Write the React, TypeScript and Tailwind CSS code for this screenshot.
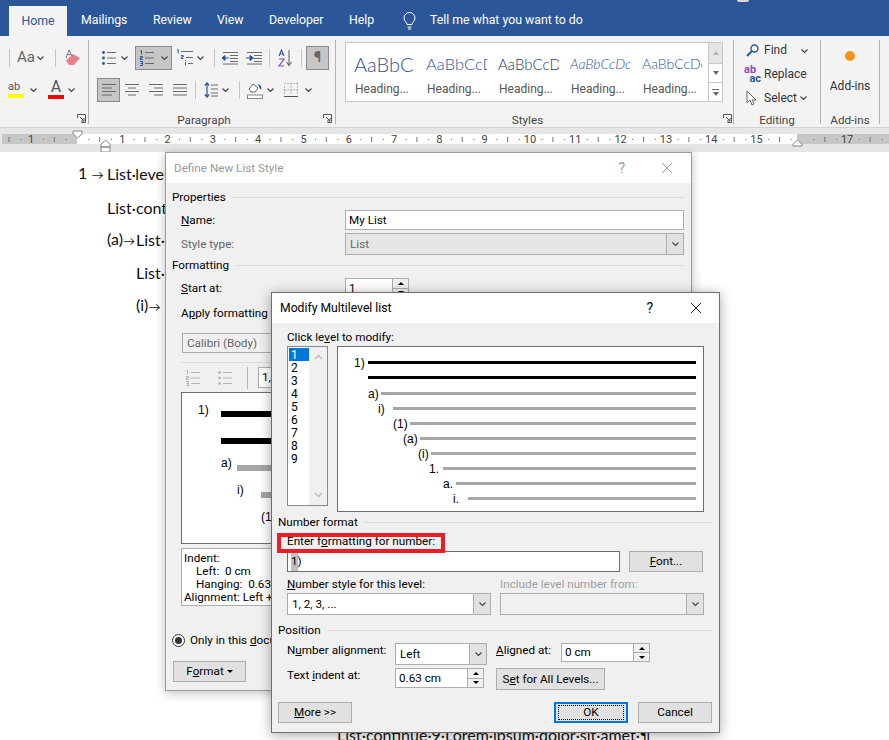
import type { ReactNode } from "react"

const LINE = "#6a6a6a"
const BLUE = "#2b579a"

function Chev({ className = "" }: { className?: string }) {
  return (
    <svg width="9" height="6" viewBox="0 0 9 6" className={`shrink-0 ${className}`}>
      <path d="M1.5 1.5 4.5 4.5 7.5 1.5" fill="none" stroke="#444" strokeWidth="1.2" />
    </svg>
  )
}

function Lines({ ys, x1, x2 }: { ys: number[]; x1: number | number[]; x2: number | number[] }) {
  return (
    <>
      {ys.map((y, i) => (
        <line
          key={y}
          x1={Array.isArray(x1) ? x1[i] : x1}
          x2={Array.isArray(x2) ? x2[i] : x2}
          y1={y}
          y2={y}
          stroke={LINE}
          strokeWidth="1"
        />
      ))}
    </>
  )
}

function Bullets({ faded }: { faded?: boolean }) {
  const c = faded ? "#b5b5b5" : BLUE
  return (
    <svg width="16" height="16" viewBox="0 0 16 16" className="shrink-0">
      <circle cx="2.5" cy="2.5" r="1.4" fill={c} />
      <circle cx="2.5" cy="8" r="1.4" fill={c} />
      <circle cx="2.5" cy="13.5" r="1.4" fill={c} />
      {[2.5, 8, 13.5].map((y) => (
        <line key={y} x1="6" x2="15" y1={y} y2={y} stroke={faded ? "#b5b5b5" : LINE} />
      ))}
    </svg>
  )
}

function Numbers({ faded }: { faded?: boolean }) {
  const c = faded ? "#b5b5b5" : BLUE
  return (
    <svg width="16" height="16" viewBox="0 0 16 16" className="shrink-0">
      <path d="M1.2 1.200 2.500.5v4M1 6.500h2.500V8H1v1.500h2.500M1 11.500h2.500v4H1M1.500 13.500h2" fill="none" stroke={c} strokeWidth="1" />
      {[2.5, 8, 13.5].map((y) => (
        <line key={y} x1="6" x2="15" y1={y} y2={y} stroke={faded ? "#b5b5b5" : LINE} />
      ))}
    </svg>
  )
}

function Multilevel() {
  return (
    <svg width="18" height="17" viewBox="0 0 18 17" className="shrink-0">
      <path d="M1 1.200 2.200.5v4M5 6.500h2.200V8H5.400v1.500h2M9.500 13v3.500M9.500 11v1" fill="none" stroke={BLUE} strokeWidth="1" />
      <Lines ys={[2.5, 8.5, 14.5]} x1={[5, 10, 12]} x2={17} />
    </svg>
  )
}

function Indent({ more }: { more?: boolean }) {
  return (
    <svg width="16" height="14" viewBox="0 0 16 14" className="shrink-0">
      <Lines ys={[1.5, 4.5, 7.5, 10.5, 13]} x1={[1, 8, 8, 8, 1]} x2={16} />
      <path d={more ? "M0 7h4V4.5L7.5 7 4 9.5V7" : "M7 7H3V4.5L0 7l3 2.5V7"} fill={BLUE} stroke={BLUE} />
    </svg>
  )
}

function Sort() {
  return (
    <svg width="15" height="18" viewBox="0 0 15 18" className="shrink-0">
      <path d="M1 7 3.5 1 6 7M2 5h3" fill="none" stroke={BLUE} strokeWidth="1.1" />
      <path d="M1 10h5L1 17h5" fill="none" stroke="#8a4fb5" strokeWidth="1.2" />
      <path d="M11 1v15M8.5 13l2.5 3.5 2.5-3.5" fill="none" stroke={LINE} strokeWidth="1.1" />
    </svg>
  )
}

function Align({ kind }: { kind: "left" | "center" | "right" | "justify" }) {
  const ys = [1.5, 5, 8.5, 12]
  const x1 = { left: [0, 0, 0, 0], center: [0, 3, 0, 3], right: [0, 5, 0, 5], justify: [0, 0, 0, 0] }[kind]
  const x2 = { left: [14, 10, 14, 10], center: [14, 11, 14, 11], right: [14, 14, 14, 14], justify: [14, 14, 14, 14] }[kind]
  return (
    <svg width="14" height="13" viewBox="0 0 14 13" className="shrink-0">
      <Lines ys={ys} x1={x1} x2={x2} />
    </svg>
  )
}

function Launcher({ className }: { className: string }) {
  return (
    <svg width="9" height="9" viewBox="0 0 9 9" className={className}>
      <path d="M.5 4V.5h8v8H4.500M3 3l4 4M7 4v3H4" fill="none" stroke="#555" strokeWidth="1" />
    </svg>
  )
}

function RibbonSep() {
  return <div className="h-[84px] w-px shrink-0 self-center bg-[#b1b1b1]" />
}

function ToolSep({ className = "" }: { className?: string }) {
  return <div className={`h-[18px] w-px shrink-0 bg-[#c6c6c6] ${className}`} />
}

function GroupLabel({ children, className = "" }: { children: ReactNode; className?: string }) {
  return <div className={`mt-auto flex h-[16px] items-center justify-center pt-[2px] text-[11.7px] text-[#444] ${className}`}>{children}</div>
}

const styleSamples = [
  { text: "AaBbCc", cls: "text-[20px] font-light text-[#2f5496] ml-[8px] w-[59px]" },
  { text: "AaBbCcD", cls: "text-[16.5px] font-light text-[#2f5496] ml-[8px] w-[61px]" },
  { text: "AaBbCcD", cls: "text-[15px] font-light text-[#1f3864] ml-[8px] w-[61px]" },
  { text: "AaBbCcDc", cls: "text-[14px] font-light italic text-[#2f5496] ml-[8px] w-[60px]" },
  { text: "AaBbCcDc", cls: "text-[14px] font-light text-[#2f5496] ml-[8px] w-[60px]" },
]

function Ribbon() {
  return (
    <div className="relative flex h-[92px] border-b border-[#d2d2d2] bg-[#f3f3f3]">
      {/* Font, cut off at the left */}
      <div className="flex w-[88px] shrink-0 flex-col">
        <div className="mt-[10px] flex h-[23px] items-center">
          <ToolSep className="ml-[9px]" />
          <span className="ml-[7px] w-[16px] text-[15px] text-[#666]">Aa</span>
          <Chev className="ml-[3px]" />
          <ToolSep className="ml-[10px]" />
          <svg width="16" height="17" viewBox="0 0 16 17" className="ml-[9px] shrink-0">
            <path d="M1 11.500 8 5l7 4-6 7H4z" fill="#e8808c" />
            <path d="M1 9 4 1l3 6M2.500 5.500h3" fill="none" stroke="#777" strokeWidth="1" />
          </svg>
        </div>
        <div className="mt-[9px] flex h-[23px] items-center">
          <div className="ml-[8px] flex w-[16px] flex-col">
            <span className="h-[12px] text-[11px] leading-[12px] text-[#555]">ab</span>
            <span className="mt-px h-[4px] bg-[#ffff00]" />
          </div>
          <Chev className="ml-[5px]" />
          <div className="ml-[10px] flex w-[16px] flex-col items-center">
            <span className="h-[14px] text-[16px] leading-[14px] text-[#555]">A</span>
            <span className="mt-px h-[4px] w-full bg-[#ff0000]" />
          </div>
          <Chev className="ml-[3px]" />
        </div>
        <Launcher className="mb-[4px] ml-[77px] mt-auto" />
      </div>
      <RibbonSep />

      {/* Paragraph */}
      <div className="relative flex w-[246px] shrink-0 flex-col">
        <div className="mt-[10px] flex h-[23px] items-center">
          <div className="ml-[12px]"><Bullets /></div>
          <Chev className="ml-[3px]" />
          <div className="ml-[6px] flex h-[24px] w-[37px] items-center border border-[#8a8a8a] bg-[#c6c6c6] pl-[3px]">
            <Numbers />
            <Chev className="ml-[5px]" />
          </div>
          <div className="ml-[4px]"><Multilevel /></div>
          <Chev className="ml-[2px]" />
          <ToolSep className="ml-[9px]" />
          <div className="ml-[7px]"><Indent /></div>
          <div className="ml-[8px]"><Indent more /></div>
          <ToolSep className="ml-[7px]" />
          <div className="ml-[8px]"><Sort /></div>
          <ToolSep className="ml-[8px]" />
          <div className="ml-[4px] flex h-[24px] w-[23px] items-center justify-center border border-[#8a8a8a] bg-[#c6c6c6] text-[15px] font-bold text-[#666]">¶</div>
        </div>
        <div className="mt-[9px] flex h-[23px] items-center">
          <div className="ml-[8px] flex h-[24px] w-[23px] items-center justify-center border border-[#8a8a8a] bg-[#c6c6c6]">
            <Align kind="left" />
          </div>
          <div className="ml-[5px]"><Align kind="center" /></div>
          <div className="ml-[10px]"><Align kind="right" /></div>
          <div className="ml-[10px]"><Align kind="justify" /></div>
          <ToolSep className="ml-[8px]" />
          <svg width="14" height="16" viewBox="0 0 14 16" className="ml-[8px] shrink-0">
            <path d="M3 1v14M.8 3.500 3 1l2.200 2.500M.8 12.500 3 15l2.200-2.500" fill="none" stroke={BLUE} strokeWidth="1.2" />
            <Lines ys={[3, 7, 11, 14]} x1={7} x2={14} />
          </svg>
          <Chev className="ml-[3px]" />
          <ToolSep className="ml-[9px]" />
          <svg width="16" height="18" viewBox="0 0 16 18" className="ml-[7px] shrink-0">
            <path d="M2 8 6 3l5 4-3 4H4z" fill="#fff" stroke="#666" />
            <path d="M11 3c3 1 4 3 3 6-1-1-2-3-3-6z" fill={BLUE} />
            <rect x=".5" y="14" width="15" height="3.500" fill="#fff" stroke="#888" />
          </svg>
          <Chev className="ml-[3px]" />
          <svg width="14" height="14" viewBox="0 0 14 14" className="ml-[9px] shrink-0">
            <path d="M.5.5h13M.5 3.500v9M13.500.5v12M.5 7h13M7 .5v12" fill="none" stroke="#777" strokeDasharray="1 2" />
            <path d="M0 13.500h14" stroke="#555" />
          </svg>
          <Chev className="ml-[6px]" />
        </div>
        <GroupLabel className="pr-[16px]">Paragraph</GroupLabel>
        <Launcher className="absolute bottom-[4px] right-[3px]" />
      </div>
      <RibbonSep />

      {/* Styles */}
      <div className="relative flex w-[397px] shrink-0 flex-col">
        <div className="ml-[9px] mt-[6px] flex h-[60px] w-[378px] border border-[#c6c6c6] bg-white">
          <div className="flex flex-1">
            {styleSamples.map((s, i) => (
              <div key={i} className="flex w-[72px] flex-col">
                <div className={`mt-[7px] h-[30px] overflow-hidden whitespace-nowrap font-['Lato',sans-serif] leading-[28px] ${s.cls}`}>{s.text}</div>
                <div className="text-center text-[12px] text-[#555]">Heading...</div>
              </div>
            ))}
          </div>
          <div className="flex w-[14px] flex-col border-l border-[#c6c6c6] text-[#777]">
            <div className="flex h-[21px] items-center justify-center border-b border-[#c6c6c6] bg-[#e6e6e6]">
              <span className="h-0 w-0 border-x-[3px] border-b-[4px] border-x-transparent border-b-[#b5b5b5]" />
            </div>
            <div className="flex h-[19px] items-center justify-center border-b border-[#c6c6c6]">
              <span className="h-0 w-0 border-x-[3px] border-t-[4px] border-x-transparent border-t-[#666]" />
            </div>
            <div className="flex flex-1 flex-col items-center justify-center gap-[2px]">
              <span className="h-px w-[7px] bg-[#666]" />
              <span className="h-0 w-0 border-x-[3px] border-t-[4px] border-x-transparent border-t-[#666]" />
            </div>
          </div>
        </div>
        <GroupLabel className="pr-[14px]">Styles</GroupLabel>
        <Launcher className="absolute bottom-[4px] right-[1px]" />
      </div>
      <RibbonSep />

      {/* Editing */}
      <div className="flex w-[86px] shrink-0 flex-col text-[12px] text-[#333]">
        <div className="mt-[3px] flex h-[23px] items-center pl-[12px]">
          <svg width="13" height="13" viewBox="0 0 13 13" className="shrink-0">
            <circle cx="8.500" cy="4.500" r="3.500" fill="none" stroke={BLUE} strokeWidth="1.400" />
            <path d="M6 7 1 12" stroke={BLUE} strokeWidth="2" />
          </svg>
          <span className="ml-[5px] w-[36px]">Find</span>
          <Chev />
        </div>
        <div className="flex h-[24px] items-center pl-[10px]">
          <div className="flex w-[17px] flex-col text-[11px] font-bold leading-[9px]">
            <span className="text-[#8a4fb5]">ab</span>
            <span className="text-right text-[#2b579a]">ac</span>
          </div>
          <span className="ml-[3px]">Replace</span>
        </div>
        <div className="flex h-[24px] items-center pl-[12px]">
          <svg width="12" height="16" viewBox="0 0 12 16" className="shrink-0">
            <path d="M1 1v12l3-3 2 5 2-1-2-4h4z" fill="#fff" stroke="#666" />
          </svg>
          <span className="ml-[6px]">Select</span>
          <Chev className="ml-[2px]" />
        </div>
        <GroupLabel>Editing</GroupLabel>
      </div>
      <RibbonSep />

      {/* Add-ins */}
      <div className="flex w-[58px] shrink-0 flex-col text-[12px] text-[#333]">
        <div className="mx-auto mt-[15px] size-[10px] rounded-full bg-[#f7931e]" />
        <div className="mt-[16px] text-center">Add-ins</div>
        <GroupLabel>Add-ins</GroupLabel>
      </div>
      <RibbonSep />
    </div>
  )
}

function Ruler() {
  const labels = [1, 2, 3, 4, 5, 6, 7, 8, 9, 10, 11, 12, 13, 14, 15, 17]
  const ticks: { x: number; big: boolean }[] = []
  for (let q = -6; q < 72; q++) {
    if (q % 4 === 0) continue
    ticks.push({ x: 77 + q * 11.33, big: Math.abs(q) % 4 === 2 })
  }
  return (
    <svg width="889" height="24" viewBox="0 128 889 24" className="block shrink-0">
      <rect x="0" y="128" width="889" height="24" fill="#e6e6e6" />
      <rect x="2" y="134" width="75" height="10" fill="#c6c6c6" />
      <rect x="77" y="134" width="720" height="10" fill="#fff" />
      <rect x="797" y="134" width="92" height="10" fill="#c6c6c6" />
      {ticks.map((t) =>
        t.big ? (
          <line key={t.x} x1={t.x} x2={t.x} y1="137" y2="142" stroke="#777" />
        ) : (
          <rect key={t.x} x={t.x} y="139" width="1" height="1" fill="#666" />
        ),
      )}
      <text x="31" y="143" textAnchor="middle" fontSize="11" fill="#444" fontFamily="Roboto, sans-serif">1</text>
      {labels.map((n) => (
        <text key={n} x={77 + n * 45.3} y="143" textAnchor="middle" fontSize="11" fill="#444" fontFamily="Roboto, sans-serif">
          {n}
        </text>
      ))}
      <path d="M73 131h9v3l-4.500 4-4.500-4z" fill="#fff" stroke="#888" />
      <path d="M101 144l4.500-4 4.500 4v3h-9zM101 147h9v5h-9z" fill="#fff" stroke="#888" />
      <path d="M793 146v-2l4.500-4 4.500 4v2z" fill="#fff" stroke="#888" />
    </svg>
  )
}

function Combo({ value, disabled, className }: { value?: string; disabled?: boolean; className: string }) {
  return (
    <div className={`flex border border-[#adadad] ${disabled ? "bg-[#e6e6e6] text-[#666]" : "bg-white"} ${className}`}>
      <span className="flex flex-1 items-center overflow-hidden whitespace-nowrap pl-[4px]">{value}</span>
      <span className="flex w-[17px] items-center justify-center border-l border-[#adadad] bg-[#e1e1e1]">
        <Chev />
      </span>
    </div>
  )
}

function Spin({ value, className }: { value: string; className: string }) {
  return (
    <div className={`flex border border-[#adadad] bg-white ${className}`}>
      <span className="flex flex-1 items-center pl-[3px]">{value}</span>
      <span className="flex w-[16px] flex-col border-l border-[#adadad] bg-[#f0f0f0]">
        <span className="flex flex-1 items-center justify-center border-b border-[#adadad]">
          <span className="h-0 w-0 border-x-[3px] border-b-[3px] border-x-transparent border-b-black" />
        </span>
        <span className="flex flex-1 items-center justify-center">
          <span className="h-0 w-0 border-x-[3px] border-t-[3px] border-x-transparent border-t-black" />
        </span>
      </span>
    </div>
  )
}

function Btn({ children, className }: { children: ReactNode; className: string }) {
  return <div className={`flex items-center justify-center border border-[#adadad] bg-[#e1e1e1] ${className}`}>{children}</div>
}

function Section({ title, className = "" }: { title: string; className?: string }) {
  return (
    <div className={`flex h-[16px] items-center ${className}`}>
      <span>{title}</span>
      <span className="ml-[6px] h-px flex-1 bg-[#dcdcdc]" />
    </div>
  )
}

function CloseX({ color }: { color: string }) {
  return (
    <svg width="12" height="12" viewBox="0 0 12 12" className="shrink-0">
      <path d="M1 1l10 10M11 1 1 11" stroke={color} strokeWidth="1" />
    </svg>
  )
}

function DefineDialog() {
  return (
    <div className="absolute left-[165px] top-[152px] flex h-[539px] w-[527px] flex-col border border-[#9b9b9b] bg-[#f0f0f0] shadow-[0_2px_10px_rgba(0,0,0,0.25)]">
      <div className="flex h-[30px] shrink-0 items-center bg-white pl-[8px] text-[#999]">
        <span className="flex-1">Define New List Style</span>
        <span className="mr-[36px] text-[14px]">?</span>
        <div className="mr-[18px]"><CloseX color="#999" /></div>
      </div>
      <div className="flex flex-col pl-[6px] pr-[6px]">
        <Section title="Properties" className="mt-[6px]" />
        <div className="mt-[5px] flex h-[20px] items-center pl-[9px]">
          <span className="w-[164px]"><u>N</u>ame:</span>
          <div className="flex h-full w-[339px] items-center border border-[#adadad] bg-white pl-[3px]">My List</div>
        </div>
        <div className="mt-[3px] flex h-[22px] items-center pl-[9px] text-[#666]">
          <span className="w-[164px]">Style type:</span>
          <Combo value="List" disabled className="h-full w-[339px]" />
        </div>
        <Section title="Formatting" className="mt-[2px]" />
        <div className="mt-[5px] flex h-[20px] items-center pl-[9px]">
          <span className="w-[164px]"><u>S</u>tart at:</span>
          <Spin value="1" className="h-full w-[64px]" />
        </div>
        <div className="mt-[7px] flex h-[16px] items-center pl-[9px]">A<u>p</u>ply formatting to:</div>
        <Combo value="Calibri (Body)" disabled className="ml-[10px] mt-[12px] h-[20px] w-[200px] bg-[#f0f0f0]" />
        <div className="ml-[9px] mt-[9px] h-px w-[495px] bg-[#dcdcdc]" />
        <div className="ml-[9px] mt-[4px] flex h-[21px] items-center">
          <div className="ml-[4px]"><Numbers faded /></div>
          <div className="ml-[16px]"><Bullets faded /></div>
          <div className="ml-[14px] h-[22px] w-px bg-[#b5b5b5]" />
          <div className="ml-[10px] flex h-full w-[60px] items-center border border-[#adadad] bg-white pl-[3px]">1, 2, 3</div>
        </div>
        <div className="ml-[9px] mt-[4px] h-[152px] w-[495px] border border-[#6d6d6d] bg-white">
          <svg width="493" height="150" viewBox="182 393 493 150" className="block">
            <g fontFamily="'Liberation Sans', sans-serif" fontSize="12" fill="#000">
              <text x="198" y="414">1)</text>
              <text x="221" y="467">a)</text>
              <text x="237" y="494">i)</text>
              <text x="261" y="521">(1)</text>
            </g>
            <rect x="221" y="411" width="60" height="6" fill="#000" />
            <rect x="221" y="438" width="60" height="6" fill="#000" />
            <rect x="237" y="465" width="44" height="6" fill="#a6a6a6" />
            <rect x="261" y="492" width="20" height="6" fill="#a6a6a6" />
          </svg>
        </div>
        <div className="ml-[9px] mt-[4px] h-[58px] w-[495px] border border-[#adadad] bg-white px-[2px] py-[3px] leading-[13px]">
          <div>Indent:</div>
          <div className="pl-[12px]">Left:&nbsp; 0 cm</div>
          <div className="pl-[12px]">Hanging:&nbsp; 0.63 cm</div>
          <div>Alignment: Left + Aligned at</div>
        </div>
        <div className="mt-[26px] flex h-[16px] items-center">
          <span className="flex size-[13px] items-center justify-center rounded-full border border-[#333] bg-white">
            <span className="size-[7px] rounded-full bg-[#333]" />
          </span>
          <span className="ml-[5px]">Only in this <u>d</u>ocument</span>
        </div>
        <Btn className="ml-px mt-[13px] h-[21px] w-[73px]">
          F<u>o</u>rmat
          <span className="ml-[3px] h-0 w-0 border-x-[3px] border-t-[3px] border-x-transparent border-t-black" />
        </Btn>
      </div>
    </div>
  )
}

const previewRows = [
  { num: "a)", nx: 368, lx: 381, y: 392 },
  { num: "i)", nx: 378, lx: 393, y: 407 },
  { num: "(1)", nx: 393, lx: 410, y: 422 },
  { num: "(a)", nx: 403, lx: 420, y: 437 },
  { num: "(i)", nx: 418, lx: 431, y: 452 },
  { num: "1.", nx: 429, lx: 443, y: 467 },
  { num: "a.", nx: 443, lx: 456, y: 482 },
  { num: "i.", nx: 453, lx: 468, y: 497 },
]

function ModifyDialog() {
  return (
    <div className="absolute left-[271px] top-[292px] flex h-[441px] w-[449px] flex-col border border-[#6f6f6f] bg-[#f0f0f0] text-black shadow-[0_2px_12px_rgba(0,0,0,0.35)]">
      <div className="flex h-[30px] shrink-0 items-center bg-white pl-[8px]">
        <span className="flex-1 text-[12.2px]">Modify Multilevel list</span>
        <span className="mr-[37px] text-[14px]">?</span>
        <div className="mr-[17px]"><CloseX color="#222" /></div>
      </div>
      <div className="mt-[6px] flex h-[16px] items-center pl-[15px]">Click le<u>v</u>el to modify:</div>
      <div className="mt-px flex items-start pl-[15px]">
        <div className="flex h-[160px] w-[41px] border border-[#8a8a8a] bg-white">
          <div className="ml-px mt-px w-[20px]">
            {[1, 2, 3, 4, 5, 6, 7, 8, 9].map((n) => (
              <div key={n} className={`h-[13px] pl-[2px] text-[12px] leading-[14px] ${n === 1 ? "bg-[#0078d7] text-white" : ""}`}>
                {n}
              </div>
            ))}
          </div>
          <div className="flex flex-1 flex-col items-center justify-between bg-[#f0f0f0] py-[7px]">
            <svg width="9" height="6" viewBox="0 0 9 6"><path d="M1 5l3.500-3.500L8 5" fill="none" stroke="#bbb" strokeWidth="1.500" /></svg>
            <svg width="9" height="6" viewBox="0 0 9 6"><path d="M1 1l3.500 3.500L8 1" fill="none" stroke="#bbb" strokeWidth="1.500" /></svg>
          </div>
        </div>
        <div className="ml-[9px] h-[166px] w-[367px] border border-[#6d6d6d] bg-white">
          <svg width="365" height="164" viewBox="338 347 365 164" className="block">
            <g fontFamily="'Liberation Sans', sans-serif" fontSize="12" fill="#000">
              <text x="354" y="367">1)</text>
              {previewRows.map((r) => (
                <text key={r.y} x={r.nx} y={r.y + 6}>{r.num}</text>
              ))}
            </g>
            <rect x="368" y="361" width="328" height="3" fill="#000" />
            <rect x="368" y="376" width="328" height="3" fill="#000" />
            {previewRows.map((r) => (
              <rect key={r.y} x={r.lx} y={r.y} width={696 - r.lx} height="3" fill="#a6a6a6" />
            ))}
          </svg>
        </div>
      </div>
      <Section title="Number format" className="ml-[6px] mr-[7px] mt-[2px]" />
      <div className="mt-[3px] flex h-[17px] items-center pl-[15px]">Enter f<u>o</u>rmatting for number:</div>
      <div className="mt-px flex h-[21px] pl-[15px]">
        <div className="flex w-[333px] items-center border border-[#6d6d6d] bg-white pl-[3px]">
          <span className="bg-[#c0c0c0]">1</span>)
        </div>
        <Btn className="ml-[9px] w-[74px]"><span><u>F</u>ont...</span></Btn>
      </div>
      <div className="mt-[4px] flex h-[16px] items-center pl-[15px]">
        <span className="w-[213px]"><u>N</u>umber style for this level:</span>
        <span className="text-[#a0a0a0]">Include level number from:</span>
      </div>
      <div className="mt-px flex h-[22px] pl-[15px]">
        <Combo value="1, 2, 3, ..." className="w-[204px]" />
        <Combo disabled className="ml-[9px] w-[204px] bg-[#f0f0f0]" />
      </div>
      <Section title="Position" className="ml-[6px] mr-[7px] mt-[7px]" />
      <div className="mt-[5px] flex h-[22px] pl-[15px]">
        <span className="w-[108px] leading-[14px]">N<u>u</u>mber alignment:</span>
        <Combo value="Left" className="w-[92px]" />
        <span className="ml-[9px] w-[65px] leading-[14px]"><u>A</u>ligned at:</span>
        <Spin value="0 cm" className="h-[19px] w-[89px]" />
      </div>
      <div className="mt-[3px] flex h-[22px] pl-[15px]">
        <span className="w-[108px] leading-[14px]">Text <u>i</u>ndent at:</span>
        <Spin value="0.63 cm" className="h-[20px] w-[89px]" />
        <Btn className="ml-[12px] w-[109px]"><span>S<u>e</u>t for All Levels...</span></Btn>
      </div>
      <div className="mt-[12px] flex h-[21px] pl-[6px] pr-[7px]">
        <Btn className="w-[74px]"><span><u>M</u>ore &gt;&gt;</span></Btn>
        <div className="ml-auto flex w-[74px] items-center justify-center border-2 border-[#0078d7] bg-[#e1e1e1]">
          <span className="flex h-[15px] w-[66px] items-center justify-center border border-dotted border-black">OK</span>
        </div>
        <Btn className="ml-[10px] w-[74px]">Cancel</Btn>
      </div>
      {/* red marker the author drew over the screenshot */}
      <div className="absolute left-[5px] top-[240px] h-[20px] w-[168px] border-4 border-[#ee1c25]" />
    </div>
  )
}

function DocLine({ children, className }: { children: ReactNode; className: string }) {
  return <div className={`flex h-[20px] items-center whitespace-nowrap ${className}`}>{children}</div>
}

export default function App() {
  return (
    <div className="relative h-[740px] w-[889px] overflow-hidden bg-white font-['Roboto',sans-serif] text-[11.7px] leading-[19px] text-black">
      {/* Title tabs */}
      <div className="relative flex h-[36px] items-end bg-[#2b579a] text-[12.3px] text-white">
        <div className="ml-[9px] flex h-[30px] w-[58px] items-center justify-center bg-[#f3f3f3] text-[#2b579a]">Home</div>
        <span className="mb-[6px] ml-[14px] w-[72px]">Mailings</span>
        <span className="mb-[6px] w-[64px]">Review</span>
        <span className="mb-[6px] w-[52px]">View</span>
        <span className="mb-[6px] w-[80px]">Developer</span>
        <span className="mb-[6px] w-[54px]">Help</span>
        <svg width="13" height="18" viewBox="0 0 13 18" className="mb-[6px] shrink-0">
          <path d="M4 12.500C4 10 1 9.500 1 6a5.500 5.500 0 0 1 11 0c0 3.500-3 4-3 6.500zM4.500 15h4M5 17h3" fill="none" stroke="#fff" />
        </svg>
        <span className="mb-[6px] ml-[14px]">Tell me what you want to do</span>
        <span className="absolute left-[737px] top-0 h-[2px] w-[12px] rounded-b-full bg-[#d8d8d8]" />
      </div>
      <Ribbon />
      <Ruler />

      {/* Document */}
      <div className="font-['Lato',sans-serif] text-[16px] text-[#111]">
        <DocLine className="ml-[78px] mt-[11px]">
          <span className="w-[29px]">1 <span className="text-[12px]">→</span></span>
          List·level·1
        </DocLine>
        <DocLine className="ml-[107px] mt-[14px]">List·continue·1</DocLine>
        <DocLine className="ml-[107px] mt-[12px]"><span className="w-[29px]">(a)<span className="text-[12px]">→</span></span>List·level·2</DocLine>
        <DocLine className="ml-[136px] mt-[13px]">List·continue·2</DocLine>
        <DocLine className="ml-[136px] mt-[13px]"><span className="w-[29px]">(i)<span className="text-[12px]">→</span></span>List·level·3</DocLine>
        <DocLine className="ml-[337px] mt-[409px]">List·continue·9·Lorem·ipsum·dolor·sit·amet·¶</DocLine>
      </div>

      <DefineDialog />
      <ModifyDialog />
    </div>
  )
}
